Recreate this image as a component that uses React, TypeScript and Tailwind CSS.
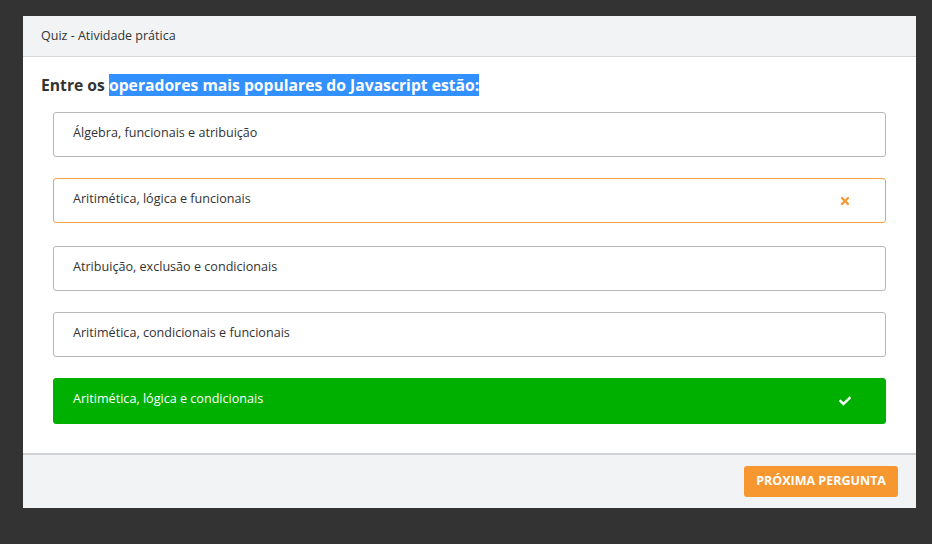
import { FaCheck, FaTimes } from "react-icons/fa";

type Option = {
  label: string;
  state?: "wrong" | "right";
  gap: string;
};

const options: Option[] = [
  { label: "Álgebra, funcionais e atribuição", gap: "" },
  { label: "Aritimética, lógica e funcionais", state: "wrong", gap: "mt-[21px]" },
  { label: "Atribuição, exclusão e condicionais", gap: "mt-[23px]" },
  { label: "Aritimética, condicionais e funcionais", gap: "mt-[21px]" },
  { label: "Aritimética, lógica e condicionais", state: "right", gap: "mt-[21px]" },
];

function OptionRow({ option }: { option: Option }) {
  const base = `${option.gap} flex h-[45px] items-center justify-between rounded-[3px] border pl-[19px] pr-[34px] text-[12.6px]`;
  if (option.state === "right") {
    return (
      <div className={`${base} h-[46px] border-[#00b000] bg-[#00b000] text-white`}>
        <span className="-mt-[3px]">{option.label}</span>
        <FaCheck className="h-[12px] w-[12px]" />
      </div>
    );
  }
  if (option.state === "wrong") {
    return (
      <div className={`${base} border-[#f5a04a] bg-white text-[#333]`}>
        <span className="-mt-[2px]">{option.label}</span>
        <FaTimes className="h-[12px] w-[12px] text-[#f7972f]" />
      </div>
    );
  }
  return (
    <div className={`${base} border-[#b5b7ba] bg-white text-[#333]`}>
      <span className="-mt-[2px]">{option.label}</span>
    </div>
  );
}

export default function App() {
  return (
    <div
      className="h-[544px] w-[932px] bg-[#333333] pl-[23px] pt-[16px]"
      style={{ fontFamily: '"Open Sans", "Noto Sans", sans-serif' }}
    >
      <div className="flex w-[893px] flex-col bg-white">
        <div className="flex h-[41px] items-center border-b border-[#d4d6d9] bg-[#f2f3f5] px-[18px] text-[12.5px] text-[#333]">
          Quiz - Atividade prática
        </div>

        <div className="px-[30px] pb-[29px] pt-[16px]">
          <h2 className="-ml-[12px] h-[24px] text-[15.7px] font-bold leading-[24px] text-[#333]">
            Entre os{" "}
            <span className="bg-[#3390ff] text-white">
              operadores mais populares do Javascript estão:
            </span>
          </h2>
          <div className="mt-[15px] flex flex-col">
            {options.map((o) => (
              <OptionRow key={o.label} option={o} />
            ))}
          </div>
        </div>

        <div className="flex h-[55px] items-center justify-end border-t-2 border-[#cfd1d4] bg-[#f2f3f5] px-[18px]">
          <button className="h-[31px] rounded-[3px] bg-[#f7972f] px-[12px] text-[12.5px] font-bold uppercase text-white">
            Próxima pergunta
          </button>
        </div>
      </div>
    </div>
  );
}
